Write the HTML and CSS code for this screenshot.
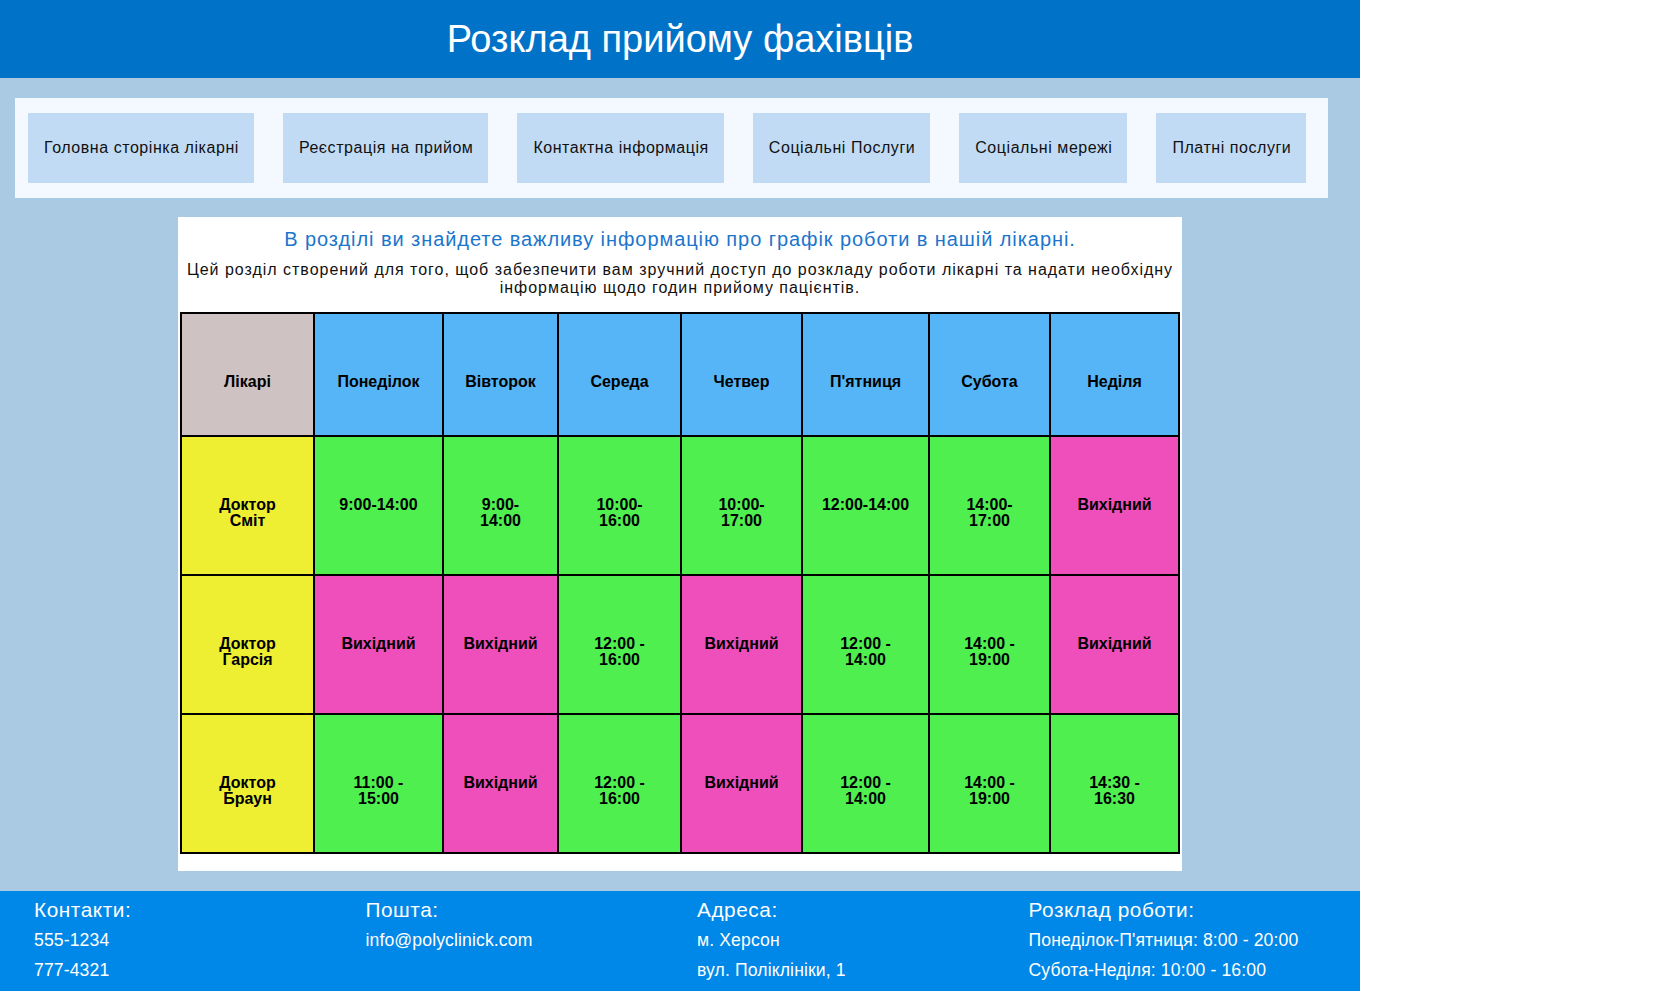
FILE: index.html
```html
<!DOCTYPE html>
<html lang="uk">
<head>
<meta charset="utf-8">
<title>Розклад прийому фахівців</title>
<link rel="stylesheet" href="styles.css">
</head>
<body>
<div class="page">
  <header class="site-header">
    <h1 class="site-title">Розклад прийому фахівців</h1>
  </header>
  <main class="main">
    <nav class="nav">
      <ul class="nav-list">
        <li><a class="nav-link" href="#">Головна сторінка лікарні</a></li>
        <li><a class="nav-link" href="#">Реєстрація на прийом</a></li>
        <li><a class="nav-link" href="#">Контактна інформація</a></li>
        <li><a class="nav-link" href="#">Соціальні Послуги</a></li>
        <li><a class="nav-link" href="#">Соціальні мережі</a></li>
        <li><a class="nav-link" href="#">Платні послуги</a></li>
      </ul>
    </nav>
    <section class="intro">
      <h2 class="intro-title">В розділі ви знайдете важливу інформацію про графік роботи в нашій лікарні.</h2>
      <p class="intro-text">Цей розділ створений для того, щоб забезпечити вам зручний доступ до розкладу роботи лікарні та надати необхідну інформацію щодо годин прийому пацієнтів.</p>
      <table class="schedule">
        <colgroup>
          <col class="col-doc">
          <col class="col-mon">
          <col class="col-tue">
          <col class="col-wed">
          <col class="col-thu">
          <col class="col-fri">
          <col class="col-sat">
          <col class="col-sun">
        </colgroup>
        <thead>
          <tr>
            <th class="corner">Лікарі</th>
            <th class="day">Понеділок</th>
            <th class="day">Вівторок</th>
            <th class="day">Середа</th>
            <th class="day">Четвер</th>
            <th class="day">П'ятниця</th>
            <th class="day">Субота</th>
            <th class="day">Неділя</th>
          </tr>
        </thead>
        <tbody>
          <tr>
            <th class="doc">Доктор Сміт</th>
            <td class="on">9:00-14:00</td>
            <td class="on">9:00-14:00</td>
            <td class="on">10:00-16:00</td>
            <td class="on">10:00-17:00</td>
            <td class="on">12:00-14:00</td>
            <td class="on">14:00-17:00</td>
            <td class="off">Вихідний</td>
          </tr>
          <tr>
            <th class="doc">Доктор Гарсія</th>
            <td class="off">Вихідний</td>
            <td class="off">Вихідний</td>
            <td class="on">12:00 - 16:00</td>
            <td class="off">Вихідний</td>
            <td class="on">12:00 - 14:00</td>
            <td class="on">14:00 - 19:00</td>
            <td class="off">Вихідний</td>
          </tr>
          <tr>
            <th class="doc">Доктор Браун</th>
            <td class="on">11:00 - 15:00</td>
            <td class="off">Вихідний</td>
            <td class="on">12:00 - 16:00</td>
            <td class="off">Вихідний</td>
            <td class="on">12:00 - 14:00</td>
            <td class="on">14:00 - 19:00</td>
            <td class="on">14:30 - 16:30</td>
          </tr>
        </tbody>
      </table>
    </section>
  </main>
  <footer class="footer">
    <div class="footer-col">
      <h3 class="footer-title">Контакти:</h3>
      <p class="footer-item">555-1234</p>
      <p class="footer-item">777-4321</p>
    </div>
    <div class="footer-col">
      <h3 class="footer-title">Пошта:</h3>
      <p class="footer-item">info@polyclinick.com</p>
    </div>
    <div class="footer-col">
      <h3 class="footer-title">Адреса:</h3>
      <p class="footer-item">м. Херсон</p>
      <p class="footer-item">вул. Поліклініки, 1</p>
    </div>
    <div class="footer-col">
      <h3 class="footer-title">Розклад роботи:</h3>
      <p class="footer-item">Понеділок-П'ятниця: 8:00 - 20:00</p>
      <p class="footer-item">Субота-Неділя: 10:00 - 16:00</p>
    </div>
  </footer>
</div>
</body>
</html>
```

FILE: styles.css
```css
* {
  box-sizing: border-box;
}

html, body {
  margin: 0;
  padding: 0;
  background: #ffffff;
}

body {
  font-family: "Liberation Sans", Arial, sans-serif;
  font-size: 16px;
  color: #000;
}

.page {
  width: 1360px;
}

.site-header {
  height: 78px;
  background: #0073c8;
  display: flex;
  align-items: center;
  justify-content: center;
}

.site-title {
  margin: 0;
  font-size: 38px;
  font-weight: normal;
  color: #ffffff;
}

.main {
  background: #aacae3;
  padding: 20px 0 20px;
}

.nav {
  margin-left: 15px;
  width: 1313px;
  background: #f3f9ff;
  padding: 15px 0 15px 13px;
}

.nav-list {
  list-style: none;
  margin: 0;
  padding: 0;
  display: flex;
  gap: 29px;
}

.nav-link {
  display: flex;
  align-items: center;
  height: 70px;
  padding: 0 15px 0 16px;
  background: #c1dbf5;
  color: #111;
  text-decoration: none;
  font-size: 16px;
  letter-spacing: 0.55px;
}

.intro {
  width: 1004px;
  margin: 19px auto 0;
  background: #ffffff;
  padding: 11px 2px 17px;
  text-align: center;
}

.intro-title {
  margin: 0 0 10px;
  font-size: 20px;
  font-weight: normal;
  line-height: 23px;
  letter-spacing: 0.93px;
  color: #1b75cc;
}

.intro-text {
  margin: 0 0 15px;
  font-size: 16px;
  line-height: 18px;
  letter-spacing: 0.98px;
  color: #111;
}

.schedule {
  width: 1000px;
  table-layout: fixed;
  border-collapse: collapse;
  border: 2px solid #000;
}

.col-doc { width: 133px; }
.col-mon { width: 129px; }
.col-tue { width: 115px; }
.col-wed { width: 123px; }
.col-thu { width: 121px; }
.col-fri { width: 127px; }
.col-sat { width: 121px; }
.col-sun { width: 129px; }

.schedule th,
.schedule td {
  border: 2px solid #000;
  padding: 60px 18px 45px;
  vertical-align: top;
  text-align: center;
  font-size: 16px;
  font-weight: bold;
  line-height: 16px;
  color: #000;
}

.schedule .corner {
  background: #cec2c2;
}

.schedule .day {
  background: #55b5f7;
}

.schedule .doc {
  background: #eeee33;
}

.schedule .on {
  background: #4fef50;
}

.schedule .off {
  background: #ee4fbb;
}

.footer {
  background: #0088e8;
  color: #ffffff;
  display: grid;
  grid-template-columns: repeat(4, 1fr);
  padding: 7px 0 6px 34px;
}

.footer-title {
  margin: 0 0 3px;
  font-size: 20.8px;
  font-weight: normal;
  line-height: 24px;
  letter-spacing: 0.55px;
}

.footer-item {
  margin: 0;
  font-size: 17.6px;
  line-height: 30px;
  letter-spacing: 0.12px;
}
```
